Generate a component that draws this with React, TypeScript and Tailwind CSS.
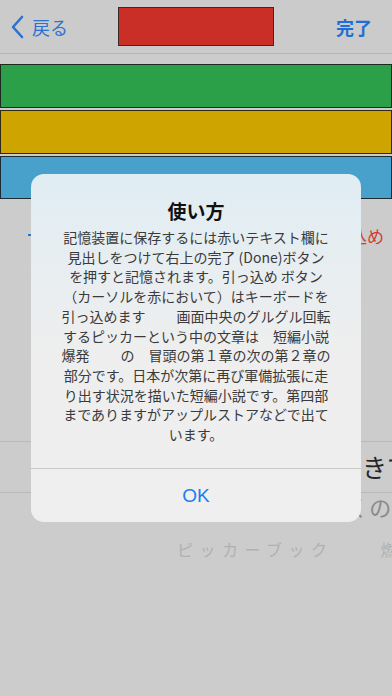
import React from 'react';

const jp = { fontFamily: '"Noto Sans CJK JP", "Noto Sans", sans-serif' };

const helpLines = [
    '記憶装置に保存するには赤いテキスト欄に',
    '見出しをつけて右上の完了 (Done)ボタン',
    'を押すと記憶されます。引っ込め ボタン',
    '（カーソルを赤において）はキーボードを',
    '引っ込めます　　 画面中央のグルグル回転',
    'するピッカーという中の文章は　短編小説',
    '爆発　　 の　冒頭の第１章の次の第２章の',
    '部分です。日本が次第に再び軍備拡張に走',
    'り出す状況を描いた短編小説です。第四部',
    'までありますがアップルストアなどで出て',
    'います。',
];

function NavBar() {
    return (
        <header className="h-[54px] flex items-center justify-between border-b border-[#b4b4b4] bg-[#cbcbcb]">
            <div className="flex items-center pl-[11px] w-[110px]">
                <svg className="w-[14px] h-[24px]" viewBox="0 0 14 24" fill="none" stroke="#2b72d2" strokeWidth={2.6} strokeLinecap="round" strokeLinejoin="round">
                    <path d="M11 2 L2 12 L11 22" />
                </svg>
                <span className="ml-[7px] text-[18px] text-[#2b72d2] leading-none">戻る</span>
            </div>
            <div className="w-[156px] h-[39px] bg-[#c92f27] border border-[#3a2a28] mt-[-1px]" />
            <div className="w-[110px] flex justify-end pr-[20px]">
                <span className="text-[18px] font-bold text-[#1f6fd6] leading-none">完了</span>
            </div>
        </header>
    );
}

function ColorBars() {
    return (
        <div className="mt-[10px] flex flex-col gap-[2px]">
            <div className="h-[44px] bg-[#2ba049] border border-[#1d2a20]" />
            <div className="h-[44px] bg-[#cea400] border border-[#2e2a14]" />
            <div className="h-[43px] bg-[#48a1ca] border border-[#1d2b33]" />
        </div>
    );
}

function Background() {
    return (
        <div className="w-[392px] h-[696px] bg-[#cccccc] overflow-hidden" style={jp}>
            <NavBar />
            <ColorBars />
            <div className="mt-[24px] h-[24px] flex items-center justify-between">
                <div className="ml-[28px] w-[3px] h-[2px] bg-[#2b72d2]" />
                <span className="text-[17px] text-[#d23a32] leading-none pr-[8px]">引っ込め</span>
            </div>
            <div className="mt-[194px] border-t border-[#b9b9b9]" />
            <div className="h-[50px] flex items-center whitespace-nowrap">
                <span className="shrink-0 pl-[362px] text-[25px] text-[#262626]">きて</span>
            </div>
            <div className="border-t border-[#b9b9b9]" />
            <div className="h-[26px] flex items-center whitespace-nowrap">
                <span className="shrink-0 pl-[324px] text-[22px] text-[#8a8a8a] tracking-[1px]">とくの次</span>
            </div>
            <div className="mt-[17px] h-[26px] flex items-center whitespace-nowrap">
                <span className="shrink-0 pl-[177px] text-[16px] text-[#b1b1b1] tracking-[6.5px]">ピッカーブック</span>
                <span className="shrink-0 pl-[47px] text-[16px] text-[#b1b1b1]">燃</span>
            </div>
        </div>
    );
}

function HelpAlert() {
    return (
        <div className="absolute left-[31px] top-[174px] w-[330px] rounded-[13px] overflow-hidden bg-gradient-to-b from-[#e0edf4] via-[#eeeeee] to-[#efefef]" style={jp}>
            <div className="pt-[24px] px-[16px] pb-[23px] text-center">
                <div className="text-[19px] font-bold leading-[26px] text-[#111111]">使い方</div>
                <div className="mt-[4px] text-[14px] leading-[19.7px] text-[#3a3a3a]">
                    {helpLines.map((line, i) => (
                        <div key={i} className="whitespace-pre">{line}</div>
                    ))}
                </div>
            </div>
            <div className="border-t border-[#c8c8c8] h-[54px] flex items-center justify-center">
                <span className="text-[19px] text-[#1b7cf2] leading-none" style={{ fontFamily: '"Liberation Sans", Arial, sans-serif' }}>OK</span>
            </div>
        </div>
    );
}

export default function App() {
    return (
        <div className="relative w-[392px] h-[696px]">
            <Background />
            <HelpAlert />
        </div>
    );
}
